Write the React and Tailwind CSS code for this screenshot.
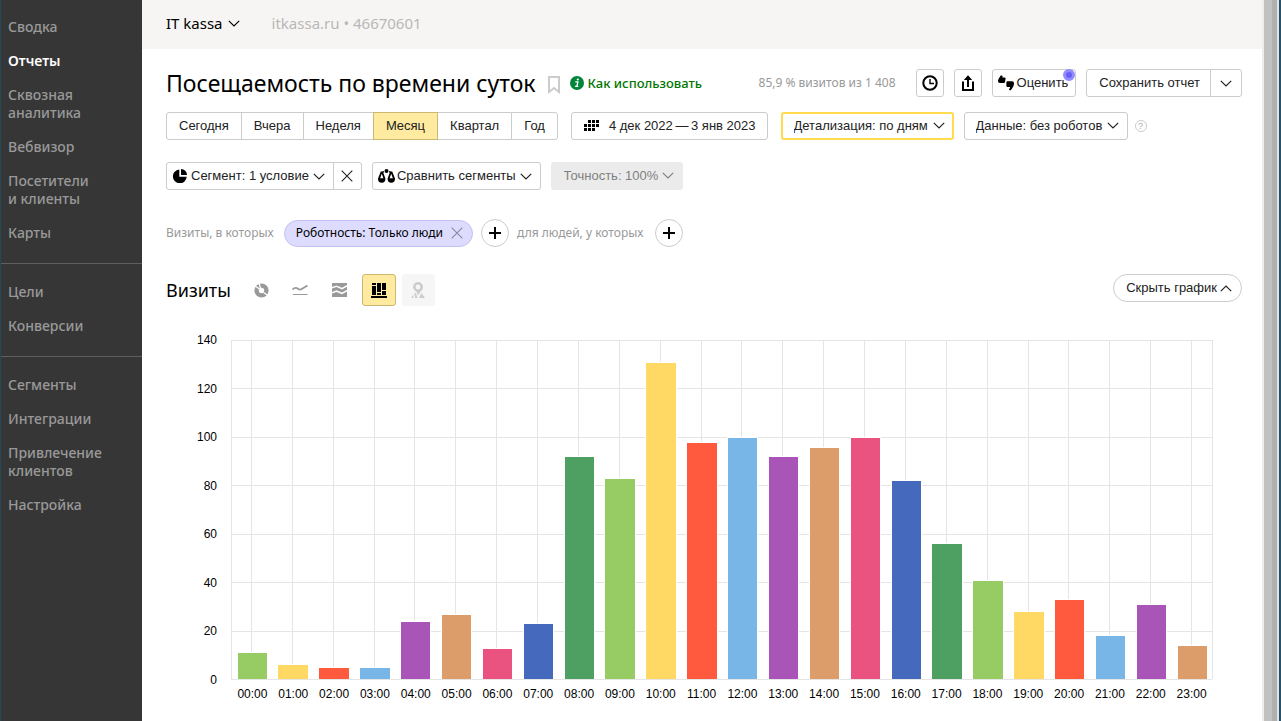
import { useState } from "react";
import clsx from "clsx";

const menu = [
  ["Сводка", "Отчеты", "Сквозная аналитика", "Вебвизор", "Посетители и\u00a0клиенты", "Карты"],
  ["Цели", "Конверсии"],
  ["Сегменты", "Интеграции", "Привлечение клиентов", "Настройка"],
];

const periods = ["Сегодня", "Вчера", "Неделя", "Месяц", "Квартал", "Год"];

const palette = [
  "#97cc64",
  "#ffd963",
  "#ff5a3e",
  "#77b6e7",
  "#a955b8",
  "#dc9d6b",
  "#ea527f",
  "#4569bc",
  "#4da062",
];

const visits = [
  11, 6, 5, 5, 24, 27, 13, 23, 92, 83, 131, 98, 100, 92, 96, 100, 82, 56, 41,
  28, 33, 18, 31, 14,
];

const MAX = 140;
const PLOT_HEIGHT = 339;
const ticks = [140, 120, 100, 80, 60, 40, 20, 0];

const box = "h-7 rounded-[3px] border border-[#ccc] bg-white";

function Chevron({ up, className }) {
  return (
    <svg
      width="12"
      height="7"
      viewBox="0 0 12 7"
      fill="none"
      stroke="currentColor"
      strokeWidth="1.2"
      className={className}
    >
      <path d={up ? "M0.8 6.2L6 1l5.2 5.2" : "M0.8 0.8L6 6l5.2-5.2"} />
    </svg>
  );
}

function Cross({ className }) {
  return (
    <svg
      width="12"
      height="12"
      viewBox="0 0 12 12"
      stroke="currentColor"
      strokeWidth="1.1"
      className={className}
    >
      <path d="M0.7 0.7l10.6 10.6M11.3 0.7L0.7 11.3" />
    </svg>
  );
}

function PlusButton({ label }) {
  return (
    <button
      aria-label={label}
      className="flex size-7 items-center justify-center rounded-full border border-[#ccc] bg-white"
    >
      <svg width="12" height="12" viewBox="0 0 12 12" fill="#000">
        <path d="M5 0h2v5h5v2H7v5H5V7H0V5h5z" />
      </svg>
    </button>
  );
}

function Dropdown({ label, text, disabled, className }) {
  return (
    <div className="relative">
      <select
        aria-label={label}
        disabled={disabled}
        className={clsx(
          "block h-7 appearance-none rounded-[3px] disabled:opacity-100",
          className,
        )}
      >
        <option>{text}</option>
      </select>
      <Chevron
        className={clsx(
          "pointer-events-none absolute top-[10px] right-[9px]",
          disabled && "text-[#808080]",
        )}
      />
    </div>
  );
}

function Sidebar() {
  return (
    <aside className="w-[142px] shrink-0 border-l border-[#24475a] bg-[#363636] pt-[10px]">
      <nav>
        {menu.map((group, i) => (
          <ul
            key={i}
            className={clsx(
              "font-['Noto_Sans'] text-[14px] leading-[18px] font-medium text-[#999]",
              i > 0 && "mt-[13px] border-t border-[#5e5e5e] pt-[11px]",
            )}
          >
            {group.map((item) => (
              <li key={item}>
                <a
                  href="#"
                  className={clsx(
                    "block w-[110px] py-2 pl-[7px]",
                    item === "Отчеты" && "font-semibold text-white",
                  )}
                >
                  {item}
                </a>
              </li>
            ))}
          </ul>
        ))}
      </nav>
    </aside>
  );
}

function TitleRow() {
  return (
    <div className="flex h-7 items-center">
      <h1 className="font-['Noto_Sans'] text-[23px] leading-[26px] whitespace-nowrap text-black">
        Посещаемость по времени суток
      </h1>
      <button aria-label="В избранное" className="ml-3 pt-1">
        <svg width="12" height="18" viewBox="0 0 12 18" fill="none" stroke="#ccc" strokeWidth="2">
          <path d="M1 1h10v15l-5-4-5 4z" />
        </svg>
      </button>
      <a
        href="#"
        className="ml-[10px] flex items-center gap-1 font-['Noto_Sans'] text-[13px] font-medium whitespace-nowrap text-[#070]"
      >
        <svg width="14" height="14" viewBox="0 0 14 14">
          <circle cx="7" cy="7" r="7" fill="#00853a" />
          <circle cx="7.8" cy="3.5" r="1.1" fill="#fff" />
          <path d="M5.3 5.8h2.6l-1 4.6h1.4M5 10.4h2" fill="none" stroke="#fff" strokeWidth="1.3" />
        </svg>
        Как использовать
      </a>
      <span className="ml-auto font-['Noto_Sans'] text-[12px] whitespace-nowrap text-[#999]">
        85,9 % визитов из 1 408
      </span>
      <div className="ml-5 flex shrink-0 gap-[10px]">
        <button aria-label="История" className={clsx(box, "flex w-7 items-center justify-center")}>
          <svg width="16" height="16" viewBox="0 0 16 16" fill="none" stroke="#000" strokeWidth="2">
            <circle cx="8" cy="8" r="6.7" />
            <path d="M8 4v4.5h4" strokeWidth="1.4" />
          </svg>
        </button>
        <button aria-label="Экспорт" className={clsx(box, "flex w-7 items-center justify-center")}>
          <svg width="14" height="16" viewBox="0 0 14 16" fill="none" stroke="#000" strokeWidth="2">
            <path d="M2 6.5V15h10V6.5" />
            <path d="M7 12V3" />
            <path d="M2.8 5L7 0.3 11.2 5z" fill="#000" stroke="none" />
          </svg>
        </button>
        <button className={clsx(box, "relative flex items-center gap-[3px] pr-[7px] pl-[5px]")}>
          <svg width="16" height="16" viewBox="0 0 16 16" fill="#000">
            <path d="M0 5.2Q0.300 3.800 3 0.300L4.700 0.900 4.300 2.500H6.600Q7.600 2.500 7.600 3.600L7 7Q6.800 7.900 6 7.900H1.800Q0 7.900 0 6z" />
            <path d="M8.400 7.200Q8.400 6.200 9.400 6.200H14.200Q16 6.200 16 8.500Q16 11.500 12.600 15.500L10.900 14.700 12.200 12H9.600Q8.400 12 8.400 11z" />
          </svg>
          Оценить
          <span className="absolute -top-px right-0 size-3 rounded-full border-[3px] border-[#928cff] bg-[#6a60f5]" />
        </button>
        <div className="flex">
          <button className={clsx(box, "rounded-r-none pr-[10px] pl-3")}>Сохранить отчет</button>
          <button
            aria-label="Другие действия"
            className={clsx(box, "-ml-px flex w-8 items-center justify-center rounded-l-none")}
          >
            <Chevron />
          </button>
        </div>
      </div>
    </div>
  );
}

function PeriodRow() {
  const [period, setPeriod] = useState("Месяц");

  return (
    <div className="mt-[15px] flex items-center">
      <div className="flex">
        {periods.map((p) => (
          <button
            key={p}
            onClick={() => setPeriod(p)}
            className={clsx(
              "-ml-px h-7 border px-3 first:ml-0 first:rounded-l-[3px] last:rounded-r-[3px]",
              p === period ? "z-1 border-[#ccb872] bg-[#ffeba0]" : "border-[#ccc] bg-white",
            )}
          >
            {p}
          </button>
        ))}
      </div>
      <button className={clsx(box, "ml-[13px] flex items-center gap-[9px] pr-[11px] pl-3 whitespace-nowrap")}>
        <svg width="16" height="12" viewBox="0 0 16 12" fill="#000">
          <path d="M4 0h3v3H4zM8 0h3v3H8zM12 0h3v3h-3zM0 4h3v3H0zM4 4h3v3H4zM8 4h3v3H8zM12 4h3v3h-3zM0 8h3v3H0zM4 8h3v3H4zM8 8h3v3H8z" />
        </svg>
        {"4 дек 2022\u2009—\u20093 янв 2023"}
      </button>
      <div className="ml-[13px] flex items-center gap-[10px]">
        <Dropdown
          label="Детализация"
          text="Детализация: по дням"
          className="border-2 border-[#ffdb4d] bg-white pr-[23px] pl-[11px]"
        />
        <Dropdown
          label="Данные"
          text="Данные: без роботов"
          className="border border-[#ccc] bg-white pr-6 pl-[11px]"
        />
      </div>
      <button
        aria-label="Справка"
        className="ml-[7px] flex size-3 items-center justify-center rounded-full border border-[#ccc] text-[9px] text-[#aaa]"
      >
        ?
      </button>
    </div>
  );
}

function SegmentRow() {
  return (
    <div className="mt-[22px] flex items-center gap-[10px]">
      <div className="flex">
        <button className={clsx(box, "flex items-center gap-1 rounded-r-none pr-2 pl-[6px]")}>
          <svg width="14" height="14" viewBox="0 0 14 14" fill="#000">
            <path d="M6.3 0.5v7.2h7.4A6.9 6.9 0 1 1 6.3 0.5z" />
            <path d="M8 0a6 6 0 0 1 6 6H8z" />
          </svg>
          Сегмент: 1 условие
          <Chevron />
        </button>
        <button
          aria-label="Сбросить сегмент"
          className={clsx(box, "-ml-px flex w-[29px] items-center justify-center rounded-l-none")}
        >
          <Cross />
        </button>
      </div>
      <button className={clsx(box, "flex items-center gap-[2px] pr-2 pl-[5px]")}>
        <svg width="17" height="14" viewBox="0 0 17 14">
          <path
            fillRule="evenodd"
            d="M2.800 2.500H4.800L7.400 9.500Q7.400 13.800 3.700 13.800T0 9.500zM3.800 4.800L2.100 9.200H5.400z"
          />
          <path
            fillRule="evenodd"
            d="M12.200 2.500H14.200L17 9.500Q17 13.800 13.300 13.800T9.600 9.500zM13.200 4.800L11.600 9.200H14.900z"
          />
          <circle cx="8.500" cy="2" r="2" />
          <circle cx="5.200" cy="2.900" r="0.800" />
          <circle cx="11.800" cy="2.900" r="0.800" />
        </svg>
        Сравнить сегменты
        <Chevron className="ml-[2px]" />
      </button>
      <Dropdown
        label="Точность"
        text="Точность: 100%"
        disabled
        className="bg-[#ebebeb] pr-6 pl-[13px] text-[#808080]"
      />
    </div>
  );
}

function FilterRow() {
  return (
    <div className="mt-[29px] flex items-center font-['Noto_Sans'] text-[12px] text-[#999]">
      <span>Визиты, в которых</span>
      <span className="ml-[10px] flex h-[27px] items-center gap-2 rounded-full border border-[#c3bff0] bg-[#dddcff] pr-[9px] pl-[11px] text-black">
        Роботность: Только люди
        <button aria-label="Убрать условие" className="text-[#88889c]">
          <Cross />
        </button>
      </span>
      <div className="ml-2 flex items-center gap-2">
        <PlusButton label="Добавить условие визита" />
        <span>для людей, у которых</span>
      </div>
      <div className="ml-3">
        <PlusButton label="Добавить условие людей" />
      </div>
    </div>
  );
}

function ChartToolbar() {
  return (
    <div className="mt-[27px] flex h-8 items-center">
      <h2 className="font-['Noto_Sans'] text-[18px] text-black">Визиты</h2>
      <div className="ml-[14px] flex gap-[6px] text-[#999]">
        <button aria-label="Круговая" className="flex h-8 w-[33px] items-center justify-center">
          <svg width="15" height="15" viewBox="0 0 15 15" fill="none" stroke="currentColor">
            <circle cx="7.5" cy="7.5" r="4.9" strokeWidth="4.4" />
            <path d="M6.500 5.500L5 0M9.500 9.500l4.500 3M5.500 6L1 3" stroke="#fff" strokeWidth="1.3" />
          </svg>
        </button>
        <button aria-label="Линии" className="flex h-8 w-[33px] items-center justify-center">
          <svg width="16" height="12" viewBox="0 0 16 12" fill="none" stroke="currentColor">
            <path d="M0.500 5.500C2.500 3.500 4 3.300 6 4.700c2 1.600 3.500 1 5-.5L15.500 1.500" strokeWidth="1.8" />
            <path d="M1 10.5h14.5" strokeWidth="1" />
          </svg>
        </button>
        <button aria-label="Области" className="flex h-8 w-[33px] items-center justify-center">
          <svg width="15" height="14" viewBox="0 0 15 14" fill="currentColor">
            <path d="M0 0h15v2L10 4.700 4.500 2.500 0 4z" />
            <path d="M0 5.500l4.500-1.500 5.500 2.500 5-2.800v3L10 9.500 4.500 7.300 0 9z" />
            <path d="M0 10.500l4.500-1.500 5.500 2.200 5-2.700V14H0z" />
          </svg>
        </button>
        <button
          aria-label="Колонки"
          className="flex h-8 w-[34px] items-center justify-center rounded-[3px] border border-[#ccb872] bg-[#ffeba0]"
        >
          <svg width="16" height="15" viewBox="0 0 16 15" fill="#000">
            <path d="M1 0h4v2H1zM1 3h4v9H1zM6 0h4v9H6zM6 10h4v2H6zM11 0h4v7h-4zM11 8h4v4h-4zM0 13h16v2H0z" />
          </svg>
        </button>
        <button
          aria-label="Карта"
          disabled
          className="flex h-8 w-[33px] items-center justify-center rounded-[3px] bg-[#f6f6f6] text-[#ccc]"
        >
          <svg width="14" height="16" viewBox="0 0 14 16" fill="currentColor">
            <path
              fillRule="evenodd"
              d="M7 0a5 5 0 0 1 5 5c0 3-3 4.500-4.500 8h-1C7.500 10 2 8.500 2 5a5 5 0 0 1 5-5zm0 2.600a2.400 2.400 0 1 0 0 4.800 2.400 2.400 0 0 0 0-4.800z"
            />
            <path d="M3.500 11h1.500l1.500 5H4zM2.300 12.500V16H0zM10.500 11L14 16H8z" />
          </svg>
        </button>
      </div>
      <button className="ml-auto flex h-7 items-center gap-[3px] self-start rounded-full border border-[#ccc] pr-[9px] pl-3">
        Скрыть график
        <Chevron up />
      </button>
    </div>
  );
}

function Chart() {
  const step = 100 / visits.length;

  return (
    <div className="mt-[34px] mr-[30px] grid grid-cols-[51px_1fr] gap-x-[14px] text-[12px] text-black">
      <div className="-my-2 flex flex-col justify-between text-right leading-4">
        {ticks.map((t) => (
          <span key={t}>{t}</span>
        ))}
      </div>
      <svg
        width="100%"
        height={PLOT_HEIGHT + 1}
        shapeRendering="crispEdges"
        className="block overflow-visible"
      >
        <g stroke="#e5e5e5" strokeWidth="1">
          {ticks.map((t) => {
            const y = Math.round(PLOT_HEIGHT * (1 - t / MAX)) + 0.5;
            return <line key={t} x1="0" x2="100%" y1={y} y2={y} />;
          })}
          {visits.map((_, i) => {
            const x = `${(i + 0.5) * step}%`;
            return <line key={i} x1={x} x2={x} y1="0" y2={PLOT_HEIGHT} />;
          })}
          <line x1="0.5" x2="0.5" y1="0" y2={PLOT_HEIGHT} />
          <line x1="100%" x2="100%" y1="0" y2={PLOT_HEIGHT} />
        </g>
        {visits.map((v, i) => {
          const h = Math.round((v / MAX) * PLOT_HEIGHT) - 1;
          return (
            <rect
              key={i}
              x={`${(i + 0.16) * step}%`}
              y={PLOT_HEIGHT - h}
              width={`${step * 0.72}%`}
              height={h}
              fill={palette[i % palette.length]}
              stroke="#fff"
              strokeWidth="2"
              paintOrder="stroke"
            />
          );
        })}
        <line x1="0" x2="100%" y1={PLOT_HEIGHT + 0.5} y2={PLOT_HEIGHT + 0.5} stroke="#e5e5e5" />
      </svg>
      <div className="col-start-2 mt-[6px] grid grid-cols-24 pl-px text-center leading-4">
        {visits.map((_, i) => (
          <span key={i}>{String(i).padStart(2, "0")}:00</span>
        ))}
      </div>
    </div>
  );
}

export default function App() {
  return (
    <div className="flex min-h-screen bg-white font-['Liberation_Sans',sans-serif] text-[13px] leading-4 text-[#222]">
      <Sidebar />
      <div className="min-w-0 flex-1">
        <header className="flex h-[49px] items-center bg-[#f6f5f3] px-6 pb-[3px] font-['Noto_Sans'] text-[15px]">
          <button className="flex items-center gap-[5px] text-black">
            IT kassa
            <Chevron />
          </button>
          <span className="ml-8 text-[#b8b8b8]">itkassa.ru • 46670601</span>
        </header>
        <main className="pt-5 pr-5 pl-6">
          <TitleRow />
          <PeriodRow />
          <SegmentRow />
          <FilterRow />
          <ChartToolbar />
          <Chart />
        </main>
      </div>
      {/* scroll track and window edge */}
      <div className="flex w-[19px] shrink-0 border-r-2 border-l-2 border-r-[#24526b] border-l-[#ededed] bg-[#e2e2e2]">
        <div className="w-2 bg-[#c1c1c1]" />
        <div className="w-[5px] bg-[#b0b0b0]" />
      </div>
    </div>
  );
}
